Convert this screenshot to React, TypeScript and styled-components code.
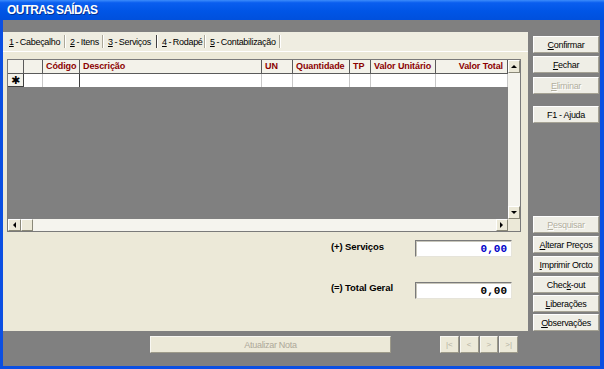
import React from "react";
import styled, { createGlobalStyle } from "styled-components";

const Global = createGlobalStyle`
  html, body { margin: 0; padding: 0; background: #ffffff; }
  body { font-family: "Liberation Sans", Arial, sans-serif; }
  #root { width: 604px; height: 369px; }
`;

const UI = `"Liberation Sans", Arial, sans-serif`;
const BEIGE = "#ECE9D8";

const Window = styled.div`
  width: 604px;
  height: 369px;
  display: flex;
  flex-direction: column;
  background: #0B4FE2;
  overflow: hidden;
`;

const TitleBar = styled.div`
  height: 20px;
  flex: none;
  display: flex;
  align-items: center;
  padding-left: 7px;
  background: linear-gradient(180deg, #3C8CFB 0%, #0A5EEF 14%, #0055E6 55%, #0050DC 100%);
  color: #ffffff;
  font: bold 12px ${UI};
  letter-spacing: -0.7px;
  text-shadow: 1px 1px 0 rgba(0, 20, 90, 0.6);
`;

const Frame = styled.div`
  flex: 1;
  display: flex;
  margin: 0 4px 3px 3px;
  background: #808080;
`;

const LeftCol = styled.div`
  width: 525px;
  flex: none;
  display: flex;
  flex-direction: column;
`;

const TopStrip = styled.div`
  height: 12px;
  flex: none;
`;

const Panel = styled.div`
  height: 299px;
  flex: none;
  background: ${BEIGE};
  display: flex;
  flex-direction: column;
`;

const TabBar = styled.div`
  height: 20px;
  flex: none;
  display: flex;
  align-items: center;
  padding-left: 2px;
  box-sizing: border-box;
  background: #EFEDE1;
  border-bottom: 1px solid #ffffff;
`;

const Tab = styled.div<{ $w: number; $active?: boolean }>`
  width: ${(p) => p.$w}px;
  height: 13px;
  flex: none;
  display: flex;
  align-items: center;
  justify-content: space-between;
  padding-left: 4px;
  box-sizing: border-box;
  font: 9px ${UI};
  letter-spacing: -0.3px;
  word-spacing: -0.5px;
  color: #000;
  white-space: nowrap;
  &::after {
    content: "";
    width: 1px;
    height: 13px;
    flex: none;
    margin-right: 1px;
    background: ${(p) => (p.$active ? "#404040" : "#ACA899")};
    box-shadow: 1px 0 0 #ffffff;
  }
`;

const Grid = styled.div`
  margin: 7px 0 0 4px;
  width: 514px;
  height: 173px;
  box-sizing: border-box;
  border: 1px solid #7A7A7A;
  display: grid;
  grid-template-columns: 500px 12px;
  grid-template-rows: 159px 12px;
  background: #808080;
`;

const DataArea = styled.div`
  display: flex;
  flex-direction: column;
  overflow: hidden;
`;

const COLS = "16px 19px 37px 182px 31px 57px 21px 65px 72px";

const HeaderRow = styled.div`
  display: grid;
  grid-template-columns: ${COLS};
  height: 14px;
  flex: none;
`;

const HeadCell = styled.div<{ $right?: boolean }>`
  box-sizing: border-box;
  background: #F3F2EA;
  border-right: 1px solid #5A5A5A;
  border-bottom: 1px solid #5A5A5A;
  color: #8B0000;
  font: bold 9px ${UI};
  letter-spacing: -0.1px;
  line-height: 13px;
  padding: 0 ${(p) => (p.$right ? "4px" : "3px")};
  text-align: ${(p) => (p.$right ? "right" : "left")};
  white-space: nowrap;
  overflow: hidden;
`;

const DataRow = styled.div`
  display: grid;
  grid-template-columns: ${COLS};
  height: 13px;
  flex: none;
`;

const Cell = styled.div<{ $dark?: boolean }>`
  box-sizing: border-box;
  background: #ffffff;
  border-right: 1px solid ${(p) => (p.$dark ? "#404040" : "#C8C8C8")};
`;

const Indicator = styled.div`
  box-sizing: border-box;
  background: #F3F2EA;
  border-right: 1px solid #404040;
  border-bottom: 1px solid #404040;
  display: flex;
  align-items: center;
  justify-content: center;
  font: 11px "DejaVu Sans", sans-serif;
  line-height: 11px;
  color: #000;
`;

const VScroll = styled.div`
  display: flex;
  flex-direction: column;
  justify-content: space-between;
  background: #F5F4EE;
`;

const HScroll = styled.div`
  display: flex;
  background: #F5F4EE;
`;

const ScrollBtn = styled.div<{ $h?: number; $w?: number }>`
  width: ${(p) => p.$w ?? 12}px;
  height: ${(p) => p.$h ?? 12}px;
  flex: none;
  box-sizing: border-box;
  background: ${BEIGE};
  border-top: 1px solid #ffffff;
  border-left: 1px solid #ffffff;
  border-right: 1px solid #8A8878;
  border-bottom: 1px solid #8A8878;
  display: flex;
  align-items: center;
  justify-content: center;
`;

const HTrack = styled.div`
  flex: 1;
`;

const Corner = styled.div`
  background: ${BEIGE};
`;

const Totals = styled.div`
  flex: 1;
  display: flex;
  flex-direction: column;
  padding: 8px 0 0 328px;
  gap: 25px;
`;

const TotalRow = styled.div`
  display: flex;
  align-items: flex-start;
`;

const TotalLabel = styled.div<{ $top: number }>`
  width: 84px;
  flex: none;
  padding-top: ${(p) => p.$top}px;
  font: bold 9.5px ${UI};
  letter-spacing: -0.1px;
  color: #000;
  white-space: nowrap;
`;

const TotalBox = styled.div<{ $color: string }>`
  width: 97px;
  height: 17px;
  box-sizing: border-box;
  background: #ffffff;
  border-top: 1px solid #7A7A7A;
  border-left: 1px solid #7A7A7A;
  border-right: 1px solid #E6E4DA;
  border-bottom: 1px solid #E6E4DA;
  box-shadow: inset 1px 1px 0 #C8C6BA;
  display: flex;
  align-items: center;
  justify-content: flex-end;
  padding-right: 4px;
  font: bold 11px "Liberation Mono", "Courier New", monospace;
  color: ${(p) => p.$color};
`;

const BottomBar = styled.div`
  flex: 1;
  display: flex;
  align-items: flex-start;
  padding-top: 5px;
`;

const WideButton = styled.div`
  margin-left: 147px;
  width: 241px;
  height: 17px;
  box-sizing: border-box;
  background: ${BEIGE};
  border-top: 1px solid #F8F7F2;
  border-left: 1px solid #F8F7F2;
  border-right: 1px solid #9D9A8A;
  border-bottom: 1px solid #9D9A8A;
  display: flex;
  align-items: center;
  justify-content: center;
  font: 9px ${UI};
  letter-spacing: -0.3px;
  color: #ACA899;
`;

const NavGroup = styled.div`
  margin-left: 49px;
  width: 78px;
  display: grid;
  grid-template-columns: repeat(4, 1fr);
  gap: 1px;
`;

const NavButton = styled.div`
  height: 17px;
  box-sizing: border-box;
  background: ${BEIGE};
  border-top: 1px solid #F8F7F2;
  border-left: 1px solid #F8F7F2;
  border-right: 1px solid #9D9A8A;
  border-bottom: 1px solid #9D9A8A;
  display: flex;
  align-items: center;
  justify-content: center;
  font: 8px ${UI};
  color: #B4B1A2;
`;

const RightCol = styled.div`
  flex: 1;
  display: flex;
  flex-direction: column;
  padding: 16px 0 0 5px;
`;

const SideButton = styled.div<{ $mt: number; $disabled?: boolean }>`
  margin-top: ${(p) => p.$mt}px;
  width: 66px;
  height: 17px;
  flex: none;
  box-sizing: border-box;
  background: #EFEEE6;
  border-top: 1px solid #ffffff;
  border-left: 1px solid #ffffff;
  border-right: 1px solid #A5A294;
  border-bottom: 1px solid #A5A294;
  display: flex;
  align-items: center;
  justify-content: center;
  font: 9px ${UI};
  letter-spacing: -0.3px;
  white-space: nowrap;
  color: ${(p) => (p.$disabled ? "#B2AF9F" : "#000")};
  text-shadow: ${(p) => (p.$disabled ? "1px 1px 0 #ffffff" : "none")};
`;

const Arrow = ({ dir }: { dir: "up" | "down" | "left" | "right" }) => {
  const pts = {
    up: "1,5 4,2 7,5",
    down: "1,2 4,5 7,2",
    left: "5,1 2,4 5,7",
    right: "2,1 5,4 2,7",
  }[dir];
  return (
    <svg width="8" height="8" viewBox="0 0 8 8">
      <polygon points={pts} fill="#000" />
    </svg>
  );
};

const tabs: { n: string; t: string; w: number; active?: boolean }[] = [
  { n: "1", t: " - Cabeçalho", w: 61 },
  { n: "2", t: " - Itens", w: 38 },
  { n: "3", t: " - Serviços", w: 54, active: true },
  { n: "4", t: " - Rodapé", w: 48 },
  { n: "5", t: " - Contabilização", w: 75 },
];

const heads: { t: string; right?: boolean }[] = [
  { t: "" },
  { t: "" },
  { t: "Código" },
  { t: "Descrição" },
  { t: "UN" },
  { t: "Quantidade" },
  { t: "TP" },
  { t: "Valor Unitário" },
  { t: "Valor Total", right: true },
];

export default function App() {
  return (
    <>
      <Global />
      <Window>
        <TitleBar>OUTRAS SAÍDAS</TitleBar>
        <Frame>
          <LeftCol>
            <TopStrip />
            <Panel>
              <TabBar>
                {tabs.map((tb) => (
                  <Tab key={tb.n} $w={tb.w} $active={tb.active}>
                    <span>
                      <u>{tb.n}</u>
                      {tb.t}
                    </span>
                  </Tab>
                ))}
              </TabBar>
              <Grid>
                <DataArea>
                  <HeaderRow>
                    {heads.map((h, i) => (
                      <HeadCell key={i} $right={h.right}>
                        {h.t}
                      </HeadCell>
                    ))}
                  </HeaderRow>
                  <DataRow>
                    <Indicator>✱</Indicator>
                    <Cell />
                    <Cell $dark />
                    <Cell />
                    <Cell />
                    <Cell />
                    <Cell />
                    <Cell />
                    <Cell />
                  </DataRow>
                </DataArea>
                <VScroll>
                  <ScrollBtn $h={13}>
                    <Arrow dir="up" />
                  </ScrollBtn>
                  <ScrollBtn $h={13}>
                    <Arrow dir="down" />
                  </ScrollBtn>
                </VScroll>
                <HScroll>
                  <ScrollBtn $w={13}>
                    <Arrow dir="left" />
                  </ScrollBtn>
                  <ScrollBtn $w={12} />
                  <HTrack />
                  <ScrollBtn $w={12}>
                    <Arrow dir="right" />
                  </ScrollBtn>
                </HScroll>
                <Corner />
              </Grid>
              <Totals>
                <TotalRow>
                  <TotalLabel $top={1}>(+) Serviços</TotalLabel>
                  <TotalBox $color="#0000C8">0,00</TotalBox>
                </TotalRow>
                <TotalRow>
                  <TotalLabel $top={0}>(=) Total Geral</TotalLabel>
                  <TotalBox $color="#000000">0,00</TotalBox>
                </TotalRow>
              </Totals>
            </Panel>
            <BottomBar>
              <WideButton>Atualizar Nota</WideButton>
              <NavGroup>
                <NavButton>|&lt;</NavButton>
                <NavButton>&lt;</NavButton>
                <NavButton>&gt;</NavButton>
                <NavButton>&gt;|</NavButton>
              </NavGroup>
            </BottomBar>
          </LeftCol>
          <RightCol>
            <SideButton $mt={0}>
              <span><u>C</u>onfirmar</span>
            </SideButton>
            <SideButton $mt={3}>
              <span><u>F</u>echar</span>
            </SideButton>
            <SideButton $mt={4} $disabled>
              <span><u>E</u>liminar</span>
            </SideButton>
            <SideButton $mt={12}>F1 - Ajuda</SideButton>
            <SideButton $mt={93} $disabled>
              <span><u>P</u>esquisar</span>
            </SideButton>
            <SideButton $mt={3}>
              <span><u>A</u>lterar Preços</span>
            </SideButton>
            <SideButton $mt={3}>
              <span><u>I</u>mprimir Orcto</span>
            </SideButton>
            <SideButton $mt={3}>
              <span>Chec<u>k</u>-out</span>
            </SideButton>
            <SideButton $mt={2}>
              <span><u>L</u>iberações</span>
            </SideButton>
            <SideButton $mt={2}>
              <span><u>O</u>bservações</span>
            </SideButton>
          </RightCol>
        </Frame>
      </Window>
    </>
  );
}
